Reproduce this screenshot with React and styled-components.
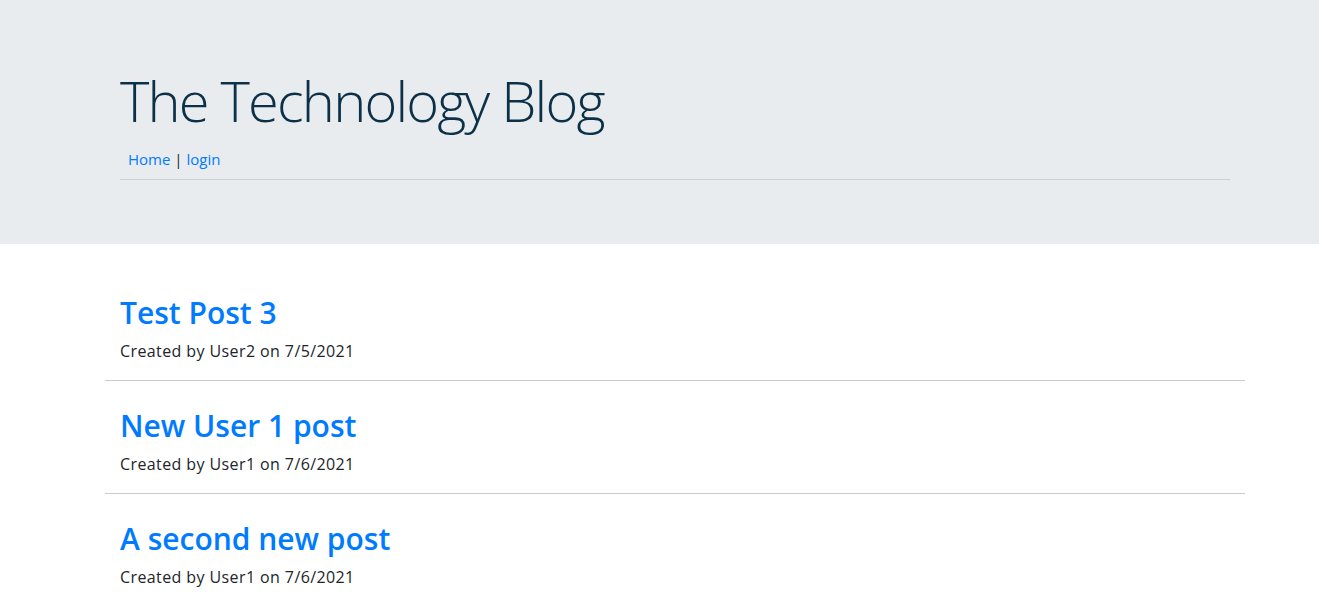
import React from 'react';
import styled, { createGlobalStyle } from 'styled-components';

const GlobalStyle = createGlobalStyle`
  body {
    margin: 0;
    font-family: "Open Sans", "Noto Sans", sans-serif;
    font-size: 16px;
    line-height: 1.5;
    color: #212529;
    background: #fff;
  }
`;

const Page = styled.div`
  padding-left: 31px;
`;

const Jumbotron = styled.header`
  background-color: #e9ecef;
  padding: 67px 0 64px;
  margin-left: -31px;
  padding-left: 31px;
`;

const Container = styled.div`
  max-width: 1140px;
  margin: 0 auto;
  padding: 0 15px;
  box-sizing: border-box;
`;

const Title = styled.h1`
  margin: 0 0 5px;
  font-size: 56px;
  font-weight: 300;
  line-height: 1.2;
  color: #0b3048;
  letter-spacing: -1.8px;
`;

const Nav = styled.nav`
  padding: 8px 8px 0;
  line-height: 24px;
  font-size: 15px;
`;

const NavLink = styled.a`
  color: #007bff;
  text-decoration: none;
`;

const Rule = styled.hr`
  margin: 8px 0 0;
  border: 0;
  border-top: 1px solid #cdd0d3;
`;

const PostList = styled.main`
  max-width: 1140px;
  margin: 24px auto 0;
`;

const Post = styled.article`
  padding: 26px 15px 17px;
  border-bottom: 1px solid #cccccc;

  &:last-child {
    border-bottom: 0;
  }
`;

const PostTitle = styled.h2`
  margin: 0 0 7px;
  font-size: 30px;
  font-weight: 600;
  line-height: 38px;

  a {
    color: #007bff;
    text-decoration: none;
  }
`;

const Meta = styled.p`
  margin: 0;
  font-size: 16px;
  letter-spacing: 0.4px;
  line-height: 24px;
`;

const posts = [
  { title: 'Test Post 3', user: 'User2', date: '7/5/2021' },
  { title: 'New User 1 post', user: 'User1', date: '7/6/2021' },
  { title: 'A second new post', user: 'User1', date: '7/6/2021' },
];

export default function App() {
  return (
    <Page>
      <GlobalStyle />
      <Jumbotron>
        <Container>
          <Title>The Technology Blog</Title>
          <Nav>
            <NavLink href="#">Home</NavLink> | <NavLink href="#">login</NavLink>
          </Nav>
          <Rule />
        </Container>
      </Jumbotron>
      <PostList>
        {posts.map((p, i) => (
          <Post key={i}>
            <PostTitle>
              <a href="#">{p.title}</a>
            </PostTitle>
            <Meta>
              Created by {p.user} on {p.date}
            </Meta>
          </Post>
        ))}
      </PostList>
    </Page>
  );
}
